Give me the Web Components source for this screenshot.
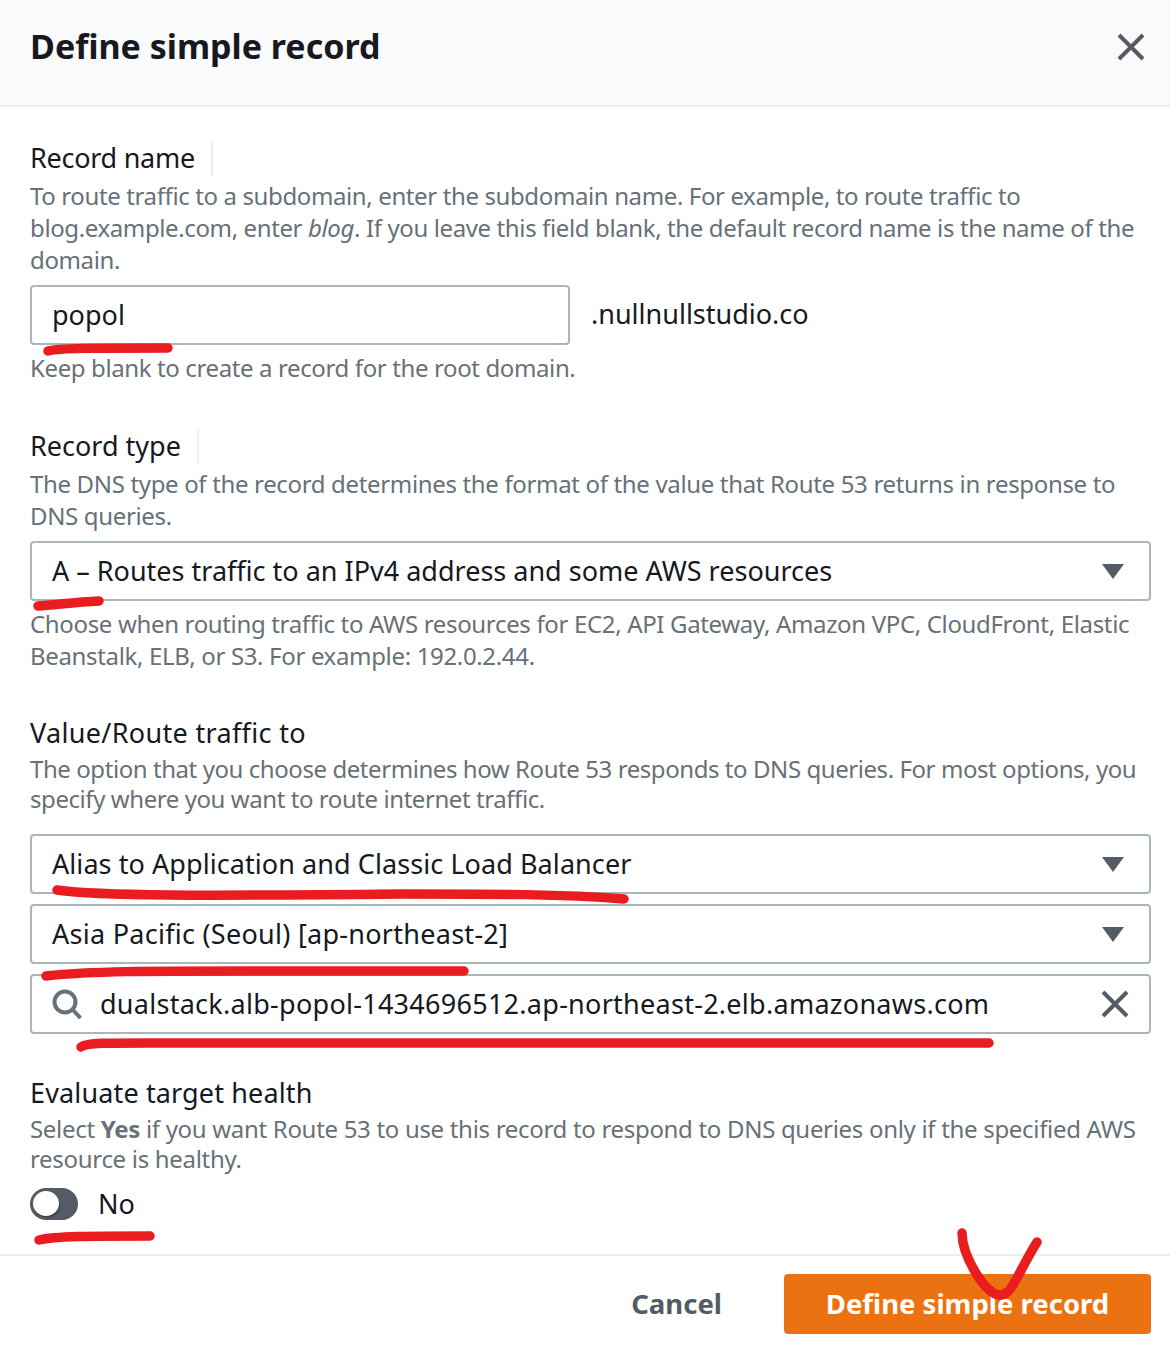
<!DOCTYPE html>
<html>
<head>
<meta charset="utf-8">
<title>Define simple record</title>
<style>
  html, body { margin: 0; padding: 0; background: #fff; }
  body { font-family: "Noto Sans", "Open Sans", sans-serif; color: #16191f; }
</style>
</head>
<body>
<record-dialog>
  <span slot="title">Define simple record</span>

  <form-section label="Record name" info style="--label-spacing:-.27px">
    <span slot="desc">To route traffic to a subdomain, enter the subdomain name. For example, to route traffic to blog.example.com, enter <i>blog</i>. If you leave this field blank, the default record name is the name of the domain.</span>
    <div style="display:flex;align-items:center;gap:21px">
      <field-box style="width:540px">popol</field-box>
      <span style="font-size:var(--field-size);line-height:60px;margin-top:-3px">.nullnullstudio.co</span>
    </div>
    <span slot="hint">Keep blank to create a record for the root domain.</span>
  </form-section>

  <form-section label="Record type" info style="--desc-spacing:-.34px">
    <span slot="desc">The DNS type of the record determines the format of the value that Route 53 returns in response to DNS queries.</span>
    <field-box kind="select">A – Routes traffic to an IPv4 address and some AWS resources</field-box>
    <span slot="hint">Choose when routing traffic to AWS resources for EC2, API Gateway, Amazon VPC, CloudFront, Elastic Beanstalk, ELB, or S3. For example: 192.0.2.44.</span>
  </form-section>

  <form-section label="Value/Route traffic to" tight style="--desc-spacing:-.43px;--label-spacing:.33px;margin-bottom:42px">
    <span slot="desc">The option that you choose determines how Route 53 responds to DNS queries. For most options, you specify where you want to route internet traffic.</span>
    <div style="display:flex;flex-direction:column;gap:10px;margin-top:20px">
      <field-box kind="select" style="letter-spacing:.07px">Alias to Application and Classic Load Balancer</field-box>
      <field-box kind="select" style="letter-spacing:.27px">Asia Pacific (Seoul) [ap-northeast-2]</field-box>
      <field-box kind="search" style="letter-spacing:.27px">dualstack.alb-popol-1434696512.ap-northeast-2.elb.amazonaws.com</field-box>
    </div>
  </form-section>

  <form-section label="Evaluate target health" tight style="--desc-spacing:-.31px;--label-spacing:.14px">
    <span slot="desc">Select <b>Yes</b> if you want Route 53 to use this record to respond to DNS queries only if the specified AWS resource is healthy.</span>
    <toggle-row style="margin-top:14px">No</toggle-row>
  </form-section>

  <action-button slot="actions" kind="link">Cancel</action-button>
  <action-button slot="actions" kind="primary">Define simple record</action-button>
</record-dialog>
<pen-marks></pen-marks>

<script>
(function() {
  const dialogTemplate = document.createElement('template');
  dialogTemplate.innerHTML = `
  <style>
    :host {
      display: flex;
      flex-direction: column;
      height: 1346px;
      --field-size: 27px;
      --desc-size: 24px;
      --desc-spacing: -0.38px;
      --label-spacing: 0;
    }
    header {
      align-items: center;
      background: #fafafa;
      border-bottom: 2px solid #eaeded;
      box-sizing: border-box;
      display: flex;
      flex: none;
      height: 107px;
      justify-content: space-between;
      padding: 0 20px 12px 30px;
    }
    h1 {
      font-size: 34px;
      font-weight: 700;
      margin: -2px 0 0;
    }
    svg { display: block; }
    main {
      display: flex;
      flex: 1;
      flex-direction: column;
      min-height: 0;
      padding: 33px 19px 0 30px;
    }
    footer {
      align-items: center;
      border-top: 2px solid #eaeded;
      display: flex;
      flex: none;
      gap: 62px;
      justify-content: flex-end;
      padding: 18px 19px 12px 0;
    }
  </style>
  <header>
    <h1><slot name="title"></slot></h1>
    <svg width="38" height="38" viewBox="0 0 38 38" fill="none" stroke="#545b64" stroke-width="4"><path d="M7 7l24 24M31 7L7 31"/></svg>
  </header>
  <main><slot></slot></main>
  <footer><slot name="actions"></slot></footer>
  `;

  class RecordDialog extends HTMLElement {
    constructor() {
      super();
      this.attachShadow({ mode: 'open' });
      this.shadowRoot.appendChild(dialogTemplate.content.cloneNode(true));
    }
  }

  const sectionTemplate = document.createElement('template');
  sectionTemplate.innerHTML = `
  <style>
    :host {
      display: block;
      margin-bottom: 44px;
    }
    :host([tight]) { margin-bottom: 43px; }
    .label {
      align-items: center;
      display: flex;
      font-size: var(--field-size);
      height: 36px;
      letter-spacing: var(--label-spacing);
      line-height: 36px;
    }
    :host([tight]) .label { margin-top: -1px; }
    .info {
      background: #eaeded;
      display: none;
      height: 35px;
      margin-left: 16px;
      width: 2px;
    }
    :host([info]) .info { display: block; }
    .desc, .hint {
      color: #687078;
      font-size: var(--desc-size);
      letter-spacing: var(--desc-spacing);
      line-height: 32px;
    }
    .desc { margin: 4px 0 9px; }
    .hint { margin-top: 7px; }
    :host([tight]) .desc { line-height: 30px; margin: 3px 0 1px; }
    :host([tight]) .hint { display: none; }
  </style>
  <div class="label"><span id="text"></span><span class="info"></span></div>
  <div class="desc"><slot name="desc"></slot></div>
  <slot></slot>
  <div class="hint"><slot name="hint"></slot></div>
  `;

  class FormSection extends HTMLElement {
    constructor() {
      super();
      this.attachShadow({ mode: 'open' });
      this.shadowRoot.appendChild(sectionTemplate.content.cloneNode(true));
    }

    connectedCallback() {
      this.shadowRoot.querySelector('#text').textContent = this.getAttribute('label');
    }
  }

  const fieldTemplate = document.createElement('template');
  fieldTemplate.innerHTML = `
  <style>
    :host {
      display: block;
    }
    .box {
      align-items: center;
      border: 2px solid #aab7b8;
      border-radius: 4px;
      box-sizing: border-box;
      display: flex;
      font-size: var(--field-size);
      height: 60px;
      padding: 0 25px 0 20px;
    }
    .value {
      flex: 1;
      margin-top: -1px;
      white-space: nowrap;
    }
    svg { display: none; flex: none; }
    :host([kind="select"]) .caret { display: block; }
    :host([kind="search"]) .search { display: block; margin-right: 18px; }
    :host([kind="search"]) .clear { display: block; margin-right: -7px; }
  </style>
  <div class="box">
    <svg class="search" width="30" height="30" viewBox="0 0 30 30" fill="none" stroke="#687078" stroke-width="4">
      <circle cx="13" cy="13" r="10.5"/>
      <path d="M20.5 20.5L28.5 29"/>
    </svg>
    <span class="value"><slot></slot></span>
    <svg class="caret" width="22" height="16" viewBox="0 0 22 16"><path d="M0 1h22L11 16z" fill="#545b64"/></svg>
    <svg class="clear" width="32" height="32" viewBox="0 0 32 32" fill="none" stroke="#545b64" stroke-width="4"><path d="M4 4l24 24M28 4L4 28"/></svg>
  </div>
  `;

  class FieldBox extends HTMLElement {
    constructor() {
      super();
      this.attachShadow({ mode: 'open' });
      this.shadowRoot.appendChild(fieldTemplate.content.cloneNode(true));
    }
  }

  const toggleTemplate = document.createElement('template');
  toggleTemplate.innerHTML = `
  <style>
    :host {
      align-items: center;
      display: flex;
      font-size: var(--field-size);
      gap: 20px;
      height: 32px;
    }
    .track {
      background: #545b64;
      border-radius: 16px;
      height: 32px;
      position: relative;
      width: 48px;
    }
    .knob {
      background: #fff;
      border-radius: 50%;
      box-shadow: 1px 2px 1px rgba(0, 0, 0, .25);
      height: 25px;
      left: 3px;
      position: absolute;
      top: 3px;
      width: 26px;
    }
    span { margin-top: -1px; }
  </style>
  <div class="track"><div class="knob"></div></div>
  <span><slot></slot></span>
  `;

  class ToggleRow extends HTMLElement {
    constructor() {
      super();
      this.attachShadow({ mode: 'open' });
      this.shadowRoot.appendChild(toggleTemplate.content.cloneNode(true));
    }
  }

  const buttonTemplate = document.createElement('template');
  buttonTemplate.innerHTML = `
  <style>
    :host {
      display: block;
      font-size: 27.5px;
      font-weight: 700;
    }
    .btn {
      align-items: center;
      border-radius: 4px;
      box-sizing: border-box;
      color: #545b64;
      display: flex;
      height: 60px;
      justify-content: center;
      padding-bottom: 2px;
    }
    :host([kind="primary"]) .btn {
      background: #ec7211;
      color: #fff;
      width: 367px;
    }
  </style>
  <div class="btn"><slot></slot></div>
  `;

  class ActionButton extends HTMLElement {
    constructor() {
      super();
      this.attachShadow({ mode: 'open' });
      this.shadowRoot.appendChild(buttonTemplate.content.cloneNode(true));
    }
  }

  const marksTemplate = document.createElement('template');
  marksTemplate.innerHTML = `
  <style>
    :host {
      display: block;
      height: 1346px;
      left: 0;
      pointer-events: none;
      position: absolute;
      top: 0;
      width: 1170px;
    }
  </style>
  <svg width="1170" height="1346" viewBox="0 0 1170 1346" fill="none" stroke="#e91c1f" stroke-width="9.5" stroke-linecap="round" stroke-linejoin="round">
    <path d="M48 351C60 348 90 348 168 348"/>
    <path d="M38 606C55 605 75 602 99 601"/>
    <path d="M57 890C100 896 200 896 400 894C500 894 560 894 624 899"/>
    <path d="M46 976C90 971 150 971 250 971L464 971"/>
    <path d="M81 1047C88 1042 110 1043 200 1043L989 1043"/>
    <path d="M39 1240C55 1236 90 1236 150 1236"/>
    <path d="M962 1233C962 1255 985 1295 1000 1295C1012 1295 1015 1278 1037 1242"/>
  </svg>
  `;

  class PenMarks extends HTMLElement {
    constructor() {
      super();
      this.attachShadow({ mode: 'open' });
      this.shadowRoot.appendChild(marksTemplate.content.cloneNode(true));
    }
  }

  customElements.define('record-dialog', RecordDialog);
  customElements.define('form-section', FormSection);
  customElements.define('field-box', FieldBox);
  customElements.define('toggle-row', ToggleRow);
  customElements.define('action-button', ActionButton);
  customElements.define('pen-marks', PenMarks);
})();
</script>
</body>
</html>
